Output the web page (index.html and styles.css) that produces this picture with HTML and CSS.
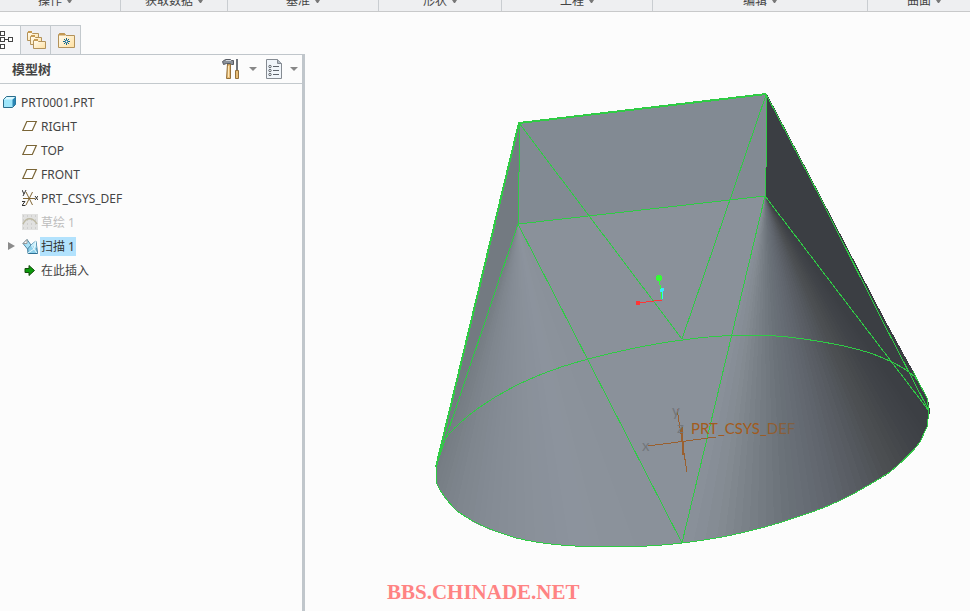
FILE: index.html
```html
<!DOCTYPE html>
<html lang="zh-CN">
<head>
<meta charset="utf-8">
<title>PRT0001.PRT</title>
<link rel="stylesheet" href="styles.css">
</head>
<body>
<header class="ribbon">
  <button class="group group-operate">操作<i class="caret"></i></button>
  <button class="group group-data">获取数据<i class="caret"></i></button>
  <button class="group group-datum">基准<i class="caret"></i></button>
  <button class="group group-shape">形状<i class="caret"></i></button>
  <button class="group group-datum">工程<i class="caret"></i></button>
  <button class="group group-edit">编辑<i class="caret"></i></button>
  <button class="group group-surface">曲面<i class="caret"></i></button>
</header>
<div class="workspace">
  <aside class="navigator">
    <div class="tabs">
      <button class="tab tab-active" aria-label="模型树">
        <svg class="tab-icon" width="14" height="20" viewBox="0 0 14 20" fill="#fff" stroke="#444" shape-rendering="crispEdges"><path d="M0 3.500h1M0 9.500h9M0 16.500h1" /><path d="M.5 1.500h4v4h-4zM.5 7.500h4v4h-4zM.5 14.500h4v4h-4zM8.500 7.500h4v4h-4z"/></svg>
      </button>
      <button class="tab" aria-label="文件夹浏览器">
        <svg width="20" height="20" viewBox="0 0 20 20">
          <defs><linearGradient id="fold" x1="0" y1="0" x2="1" y2="1"><stop offset="0" stop-color="#fffdf4"/><stop offset="1" stop-color="#ffe0a0"/></linearGradient></defs>
          <g fill="url(#fold)" stroke="#b3925a"><path d="M1.500 10.500v-8h4l1 1h6v7z"/><path d="M4.500 14.500v-8h4l1 1h6v7z"/><path d="M7.500 18.500v-8h4l1 1h7v7z"/></g>
          <path d="M2 2h4M5 6h4M8 10h4" stroke="#c69a52" stroke-width="2"/>
        </svg>
      </button>
      <button class="tab" aria-label="收藏夹">
        <svg width="20" height="20" viewBox="0 0 20 20"><path d="M2.500 17.500v-13l1-1h5l1.500 2h8.500v12z" fill="url(#fold)" stroke="#b3925a"/><path d="M3 4.500h6" stroke="#c69a52" stroke-width="2"/><path d="M10.500 8v7M7 11.500h7M8 9l5 5M13 9l-5 5" stroke="#14678c"/><circle cx="10.500" cy="11.500" r="1" fill="#fff"/></svg>
      </button>
    </div>
    <section class="panel">
      <div class="panel-head">
        <h1 class="panel-title">模型树</h1>
        <button class="tool" aria-label="设置">
          <svg width="20" height="22" viewBox="0 0 20 22"><path d="M5.500 6h3v14.500h-4z" fill="#e7bd78" stroke="#94703a"/><path d="M6.500 8v11" stroke="#ffe8b8"/><path d="M.5 3.500l3-2h5l1 1h2v4h-2l-1-1h-4l-3 1z" fill="#8b919a" stroke="#565b63"/><path d="M4 2.500h5" stroke="#d4d9df"/><path d="M15 1v11" stroke="#6d737b" stroke-width="2"/><path d="M13.500 12.500h3v8h-3z" fill="#e7bd78" stroke="#94703a"/></svg>
          <i class="caret caret-large"></i>
        </button>
        <button class="tool" aria-label="显示">
          <svg width="18" height="22" viewBox="0 0 18 22"><path d="M1.500 1.500h11l4 4v15h-15z" fill="#f0f5fa" stroke="#858b92"/><path d="M12.500 1.500v4h4" fill="#aeb8c2" stroke="#858b92"/><path d="M8 8.500h6M8 12.500h6M8 16.500h6" stroke="#5d646c"/><g fill="#fff" stroke="#5d646c"><circle cx="5" cy="8.500" r="1.200"/><circle cx="5" cy="12.500" r="1.200"/><circle cx="5" cy="16.500" r="1.200"/></g></svg>
          <i class="caret caret-large"></i>
        </button>
      </div>
      <ul class="tree">
        <li class="node root"><svg class="icon" width="16" height="16" viewBox="0 0 16 16"><path d="M1.500 5.500l3-3h9v8l-3 3h-9z" fill="#9fe6fb" stroke="#2b6c8b"/><path d="M10.500 13V5.500l3-3v8z" fill="#2b86b4"/><path d="M2 5.500l3-2.500h8l-2.500 2.500z" fill="#dbf8ff"/></svg><span class="label">PRT0001.PRT</span></li>
        <li class="node"><svg class="icon" width="16" height="16" viewBox="0 0 16 16"><path d="M.8 12.500l4-9h9.500l-4 9z" fill="#fff" stroke="#7a6536" stroke-width="1.200"/></svg><span class="label">RIGHT</span></li>
        <li class="node"><svg class="icon" width="16" height="16" viewBox="0 0 16 16"><path d="M.8 12.500l4-9h9.500l-4 9z" fill="#fff" stroke="#7a6536" stroke-width="1.200"/></svg><span class="label">TOP</span></li>
        <li class="node"><svg class="icon" width="16" height="16" viewBox="0 0 16 16"><path d="M.8 12.500l4-9h9.500l-4 9z" fill="#fff" stroke="#7a6536" stroke-width="1.200"/></svg><span class="label">FRONT</span></li>
        <li class="node"><svg class="icon" width="16" height="16" viewBox="0 0 16 16" fill="none"><path d="M1 8.500h12M4 2l6.500 13M10.500 2L4 15" stroke="#806634"/><path d="M0 0l2 4M4 0L1 6M0 11.500h3l-3 4h3.500M13 6l3 4M16 6l-3 4" stroke="#333"/></svg><span class="label">PRT_CSYS_DEF</span></li>
        <li class="node muted"><svg class="icon" width="16" height="16" viewBox="0 0 16 16"><path d="M0 0h16v16H0z" fill="#e1e1e0"/><path d="M1 2h15M1 6h15M1 10h15M1 14h15" stroke="#bcbcbc" stroke-dasharray="1 3"/><path d="M1 10C4 3 11 3 15 10" fill="none" stroke="#bdb9a4" stroke-width="1.500"/></svg><span class="label">草绘 1</span></li>
        <li class="node expandable"><button class="expander" aria-label="展开"></button><svg class="icon" width="16" height="16" viewBox="0 0 16 16"><path d="M5.500 8L9 7l5-4 1.500 12.500H6z" fill="#8fd0ea" stroke="#2d7095"/><path d="M9 7l5-4 .5 7z" fill="#c9eefb"/><path d="M9 7l6 8M14 3l-2 8-6 4" fill="none" stroke="#e7faff"/><path d="M1 5.500l4-4L9 7l-3.500 4z" fill="#a9e1f6" stroke="#5189a7"/><path d="M1 5.500l4-4v4z" fill="#fff" stroke="#999"/></svg><span class="label selected">扫描 1</span></li>
        <li class="node"><svg class="icon" width="16" height="16" viewBox="0 0 16 16"><path d="M3 6.500h4v-3l5.500 5-5.500 5v-3H3z" fill="#0c9a0c" stroke="#154c0d"/></svg><span class="label">在此插入</span></li>
      </ul>
    </section>
  </aside>
  <main class="viewport">
    <svg class="model" viewBox="305 12 665 599" preserveAspectRatio="xMinYMin meet" role="img" aria-label="PRT_CSYS_DEF">
      <defs><linearGradient id="fade" gradientUnits="userSpaceOnUse" x1="692" y1="0" x2="797" y2="0"><stop offset=".6" stop-color="#a35a1c"/><stop offset="1" stop-color="#796149"/></linearGradient></defs>
      <g shape-rendering="crispEdges">
        <path d="M519 122L436 467 518 224z" fill="#737a81"/>
        <path d="M519 122L767 94 765 196 518 224z" fill="#828a93"/>
        <path d="M767 94L820 195 885 320 913 371 928 399 930 411 765 196z" fill="#3b3e43"/>
        <g id="fans"></g>
        <path d="M518 224L765 196 682 543z" fill="#8a919a"/>
        <g class="edges">
          <path d="M519 123L682 339 766 95M518 224L765 196 682 543zM518 224L436 467M765 196L929 411M767 96L820 197 882 320 929 411"/>
          <path d="M436 467L445 439C451 431 465 417 480 407C500 393 528 379 550 371C582 359 640 345 690 339C705 337 720 336 733 335.500H765C792 336 843 344 870 353C890 360 912 371 918 381"/>
          <path d="M436 467L436 482C441 494 447 501 456 510C472 523 496 532 516 538C545 545 580 547 610 547C636 547 662 546 690 542C714 539 735 535 757 529C782 523 801 516 823 508C848 498 870 485 890 472C903 461 915 449 920 442L927 427 929 411 927 398 918 381 913 371"/>
          <path class="outline" d="M766 94L519 123 436 467"/>
          <path d="M519.500 123L518.500 224M766.500 94V140L765.500 196"/>
        </g>
        <path class="axis" d="M648 446L716 437M677 409L687 472"/>
        <path class="axis axis-z" d="M682 427L683 455"/>
        <path d="M659 278L662 299" stroke="#33ff33" stroke-width="1"/>
        <path d="M662.500 290V299" stroke="#38e8ff" stroke-width="1"/>
        <path d="M638 303L662 300" stroke="#ff3535" stroke-width="1"/>
        <circle cx="659" cy="278" r="3" fill="#33ff33"/><circle cx="662" cy="290" r="2" fill="#38e8ff"/><circle cx="638" cy="303" r="2.500" fill="#ff3535"/>
      </g>
      <text class="csys-name" x="691" y="434">PRT_CSYS_DEF</text>
      <g class="csys-axis"><text x="642" y="451">x</text><text x="672" y="416">y</text><text x="677" y="433">z</text></g>
    </svg>
    <p class="watermark">BBS.CHINADE.NET</p>
  </main>
</div>
<script src="model.js"></script>
</body>
</html>
```
FILE: styles.css
```css
* { box-sizing: border-box; }
body {
  margin: 0;
  height: 100vh;
  display: flex;
  flex-direction: column;
  overflow: hidden;
  background: #fcfcfc;
  color: #444;
  font: 12px/16px "Noto Sans", "Noto Sans CJK SC", sans-serif;
}
button { margin: 0; padding: 0; border: 0; background: none; color: inherit; font: inherit; }

.ribbon {
  flex: none;
  display: flex;
  align-items: flex-end;
  height: 12px;
  overflow: hidden;
  background: #eeeff1;
  border-bottom: 1px solid #c8c9ca;
}
.group {
  flex: none;
  display: flex;
  justify-content: center;
  align-items: center;
  gap: 5px;
  height: 20px;
  border-right: 1px solid #c9cdd1;
}
.group-operate { width: 121px; padding-right: 10px; }
.group-data { width: 107px; }
.group-datum { width: 151px; }
.group-shape { width: 123px; }
.group-edit { width: 215px; }
.group-surface { flex: 1; padding-left: 10px; border-right: 0; }
.caret {
  width: 5px;
  border: solid transparent;
  border-width: 3px 2px 0;
  border-top-color: #777;
}
.caret-large { width: 8px; border-width: 4px 4px 0; border-top-color: #888; }

.workspace { flex: 1; display: flex; min-height: 0; }
.navigator { flex: none; width: 305px; display: flex; flex-direction: column; padding-top: 13px; }
.tabs { display: flex; height: 29px; }
.tab {
  display: flex;
  align-items: center;
  justify-content: center;
  width: 30px;
  background: #eeeff2;
  border: solid #c3c9cd;
  border-width: 1px 1px 0 0;
}
.tab-active { justify-content: flex-start; width: 21px; background: none; }
.panel { flex: 1; border: solid #c0c6cb; border-width: 1px 3px 0 0; }
.panel-head {
  display: flex;
  align-items: center;
  gap: 8px;
  height: 29px;
  padding: 0 4px 0 12px;
  border-bottom: 1px solid #c3c9cd;
}
.panel-title { flex: 1; margin: 0; font-size: 13px; line-height: 20px; }
.tool { display: flex; align-items: center; gap: 7px; }

.tree { margin: 0; padding: 6px 0 0; list-style: none; }
.node { display: flex; align-items: center; height: 24px; padding-left: 22px; }
.root { padding-left: 2px; }
.expandable { padding-left: 8px; }
.expander {
  width: 14px;
  height: 8px;
  background: #8b8b8b;
  clip-path: polygon(0 0, 7px 4px, 0 8px);
}
.icon { flex: none; }
.label { margin-left: 2px; padding: 0 1px; line-height: 19px; }
.muted { color: #bdbdbd; }
.selected { background: #b2e2fd; color: #333; }

.viewport { flex: 1; min-width: 0; position: relative; }
.model { display: block; width: 100%; height: 100%; }
.edges { fill: none; stroke: #2fcb45; stroke-width: 1; }
.outline { stroke-width: 2; }
.axis { fill: none; stroke: #9a602f; stroke-width: 1; }
.axis-z { stroke-width: 2; }
.csys-name { font: 15px Lato, sans-serif; fill: url(#fade); }
.csys-axis { font: 15px Lato, sans-serif; fill: #73777c; }
.watermark {
  position: absolute;
  left: 82px;
  bottom: 7px;
  margin: 0;
  color: #ff8383;
  font: bold 21px/24px "Liberation Serif", serif;
}
```
FILE: model.js
```js
// Shades the two conical corners as fans of thin facets from each apex.
const fans = [
  { apex: [518, 224], rim: [
    [436, 467, 115, 122, 129], [436, 482, 118, 125, 132], [444, 497, 122, 129, 136],
    [456, 510, 126, 133, 141], [473, 522, 129, 136, 145], [490, 530, 132, 139, 148],
    [516, 538, 135, 142, 151], [545, 544, 138, 145, 155], [582, 547, 140, 147, 157],
    [610, 547, 139, 146, 155], [648, 546, 138, 145, 154], [682, 543, 138, 145, 154] ] },
  { apex: [765, 196], rim: [
    [682, 543, 138, 145, 154], [717, 538, 132, 139, 147], [741, 533, 123, 130, 137],
    [766, 527, 114, 121, 128], [790, 520, 106, 113, 120], [812, 512, 101, 107, 115],
    [832, 504, 96, 101, 109], [851, 495, 90, 94, 101], [870, 485, 83, 87, 92],
    [885, 476, 77, 80, 83], [898, 466, 72, 75, 78], [911, 453, 66, 69, 73],
    [921, 440, 62, 65, 70], [927, 427, 60, 63, 68], [930, 411, 59, 62, 67] ] }
];
const layer = document.getElementById("fans");
const STEPS = 3;
const mix = (a, b, t) => a.map((v, i) => v + (b[i] - v) * t);
for (const { apex, rim } of fans) {
  for (let i = 0; i < rim.length - 1; i++) {
    for (let s = 0; s < STEPS; s++) {
      const p = mix(rim[i], rim[i + 1], s / STEPS);
      const q = mix(rim[i], rim[i + 1], (s + 1) / STEPS);
      const c = mix(p, q, 0.5).slice(2).map(Math.round);
      const facet = document.createElementNS("http://www.w3.org/2000/svg", "polygon");
      facet.setAttribute("points", `${apex} ${p[0]},${p[1]} ${q[0]},${q[1]}`);
      facet.setAttribute("fill", `rgb(${c})`);
      layer.append(facet);
    }
  }
}
```
